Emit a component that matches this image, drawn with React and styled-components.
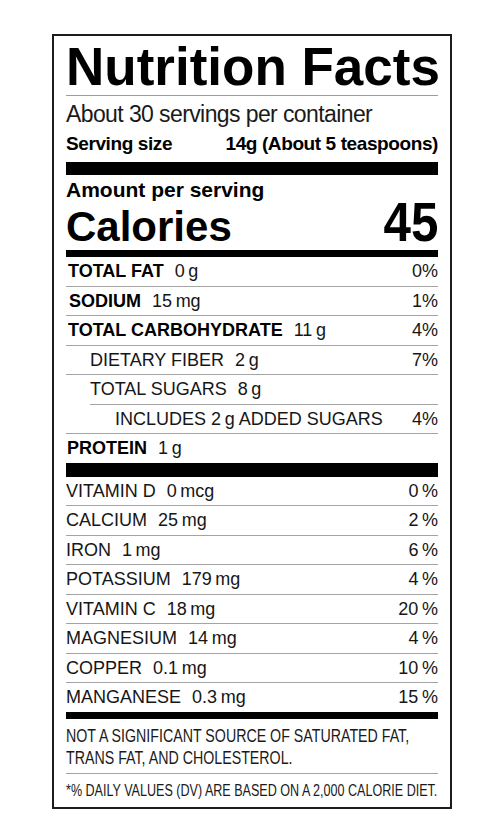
import React from "react";
import styled, { createGlobalStyle } from "styled-components";

const GlobalStyle = createGlobalStyle`
  html, body {
    margin: 0;
    padding: 0;
    background: #fff;
  }
  body {
    font-family: "Liberation Sans", Arial, sans-serif;
    color: #111;
  }
`;

const Label = styled.section`
  box-sizing: border-box;
  width: 400px;
  margin: 34px 0 0 52px;
  border: 2px solid #1c1c1c;
  padding: 3px 12px 6px;
`;

// condensed type: no narrow face installed, so squeeze the regular one
const Squeeze = styled.span`
  display: inline-block;
  white-space: nowrap;
  transform: scaleX(${(p) => p.$x});
  transform-origin: ${(p) => p.$origin || "left"} center;
`;

const Title = styled.h1`
  margin: 0;
  font-size: 53px;
  line-height: 56px;
  font-weight: 700;
  white-space: nowrap;
  color: #000;
  border-bottom: 1px solid #9c9c9c;
`;

const Servings = styled.div`
  margin-top: 5px;
  font-size: 23px;
  line-height: 26px;
  letter-spacing: -0.6px;
  color: #1a1a1a;
`;

const ServingSize = styled.div`
  display: flex;
  justify-content: space-between;
  margin-top: 4px;
  font-size: 19px;
  line-height: 26px;
  font-weight: 700;
  letter-spacing: -0.4px;
  color: #000;
`;

const Bar = styled.div`
  height: ${(p) => p.$h}px;
  margin-top: ${(p) => p.$mt || 0}px;
  background: #000;
`;

const AmountHead = styled.div`
  margin-top: 3px;
  font-size: 21px;
  line-height: 24px;
  font-weight: 700;
  color: #000;
`;

const CaloriesRow = styled.div`
  display: flex;
  justify-content: space-between;
  align-items: baseline;
  color: #000;
  font-weight: 700;
`;

const CaloriesLabel = styled.span`
  font-size: 42px;
  line-height: 44px;
`;

const CaloriesValue = styled.span`
  font-size: 56px;
  line-height: 40px;
`;

const Group = styled.div`
  & > div:last-child {
    border-bottom: none;
  }
`;

const Row = styled.div`
  display: flex;
  justify-content: space-between;
  align-items: baseline;
  margin-left: ${(p) => p.$inset || 0}px;
  padding-left: ${(p) => p.$indent || 0}px;
  font-size: 18px;
  line-height: 28.5px;
  color: #161616;
  border-bottom: 1px solid #a4a4a4;
`;

const Name = styled.span`
  font-weight: ${(p) => (p.$bold ? 700 : 400)};
  color: ${(p) => (p.$bold ? "#000" : "inherit")};
`;

const Qty = styled.span`
  margin-left: 11px;
`;

const Footnote = styled.div`
  margin-top: 6px;
  padding-bottom: 4px;
  font-size: 18px;
  line-height: 22px;
  color: #1a1a1a;
  border-bottom: 1px solid #a4a4a4;
  overflow: hidden;
`;

const DVNote = styled.div`
  padding-top: 7px;
  font-size: 16px;
  line-height: 20px;
  color: #1a1a1a;
  overflow: hidden;
`;

const T = "\u2009";

const macros = [
  { name: "TOTAL FAT", qty: `0${T}g`, dv: "0%", bold: true, indent: 2 },
  { name: "SODIUM", qty: `15${T}mg`, dv: "1%", bold: true, indent: 3 },
  { name: "TOTAL CARBOHYDRATE", qty: `11${T}g`, dv: "4%", bold: true, indent: 2 },
  { name: "DIETARY FIBER", qty: `2${T}g`, dv: "7%", indent: 24 },
  { name: "TOTAL SUGARS", qty: `8${T}g`, dv: "", inset: 24 },
  { name: `INCLUDES 2${T}g ADDED SUGARS`, qty: "", dv: "4%", indent: 49 },
  { name: "PROTEIN", qty: `1${T}g`, dv: "", bold: true, indent: 1 },
];

const minerals = [
  { name: "VITAMIN D", qty: `0${T}mcg`, dv: `0${T}%` },
  { name: "CALCIUM", qty: `25${T}mg`, dv: `2${T}%` },
  { name: "IRON", qty: `1${T}mg`, dv: `6${T}%` },
  { name: "POTASSIUM", qty: `179${T}mg`, dv: `4${T}%` },
  { name: "VITAMIN C", qty: `18${T}mg`, dv: `20${T}%` },
  { name: "MAGNESIUM", qty: `14${T}mg`, dv: `4${T}%` },
  { name: "COPPER", qty: `0.1${T}mg`, dv: `10${T}%` },
  { name: "MANGANESE", qty: `0.3${T}mg`, dv: `15${T}%` },
];

function NutrientRow({ item }) {
  return (
    <Row $indent={item.indent} $inset={item.inset}>
      <span>
        <Name $bold={item.bold}>{item.name}</Name>
        {item.qty && <Qty>{item.qty}</Qty>}
      </span>
      <span>{item.dv}</span>
    </Row>
  );
}

export default function App() {
  return (
    <>
      <GlobalStyle />
      <Label>
        <Title>Nutrition Facts</Title>
        <Servings>About 30 servings per container</Servings>
        <ServingSize>
          <span>Serving size</span>
          <span>14g (About 5 teaspoons)</span>
        </ServingSize>
        <Bar $h={13} $mt={5} />
        <AmountHead>Amount per serving</AmountHead>
        <CaloriesRow>
          <CaloriesLabel>Calories</CaloriesLabel>
          <CaloriesValue>
            <Squeeze $x={0.88} $origin="right">45</Squeeze>
          </CaloriesValue>
        </CaloriesRow>
        <Bar $h={7} $mt={1} />
        <Group>
          {macros.map((m) => (
            <NutrientRow key={m.name} item={m} />
          ))}
        </Group>
        <Bar $h={14} />
        <Group>
          {minerals.map((m) => (
            <NutrientRow key={m.name} item={m} />
          ))}
        </Group>
        <Bar $h={7} />
        <Footnote>
          <Squeeze $x={0.79}>NOT A SIGNIFICANT SOURCE OF SATURATED FAT,</Squeeze>
          <br />
          <Squeeze $x={0.79}>TRANS FAT, AND CHOLESTEROL.</Squeeze>
        </Footnote>
        <DVNote>
          <Squeeze $x={0.785}>*% DAILY VALUES (DV) ARE BASED ON A 2,000 CALORIE DIET.</Squeeze>
        </DVNote>
      </Label>
    </>
  );
}
